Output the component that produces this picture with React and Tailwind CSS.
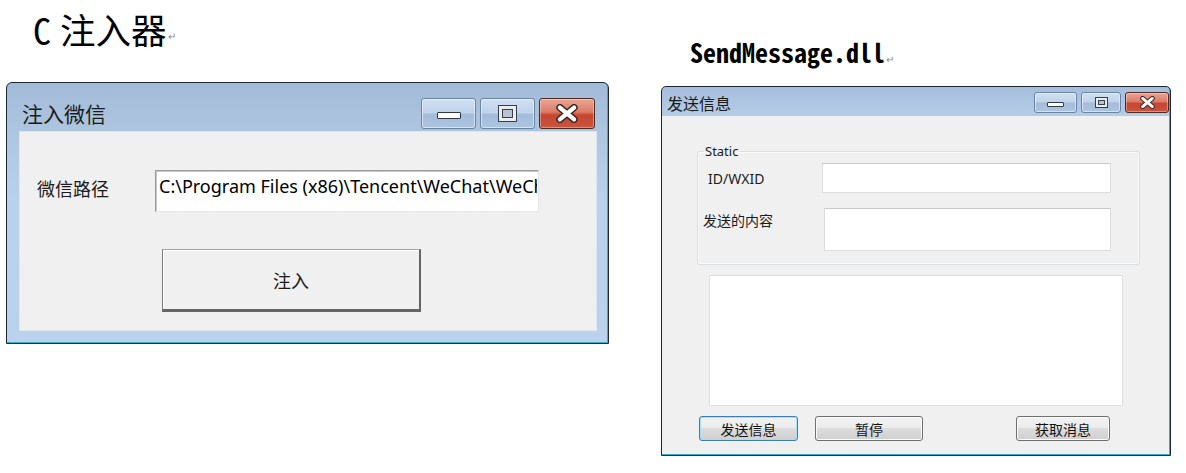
const cjk = "font-['Noto_Sans_CJK_SC',sans-serif]";
const ui = "font-['Noto_Sans','Noto_Sans_CJK_SC',sans-serif]";

function CloseX({ w, h }) {
  return (
    <svg width={w} height={h} viewBox="0 0 20 16">
      <path d="M4 3 L16 13 M16 3 L4 13" stroke="#3b2622" strokeWidth="6" strokeLinecap="round" fill="none" />
      <path d="M4 3 L16 13 M16 3 L4 13" stroke="#ffffff" strokeWidth="3.6" strokeLinecap="round" fill="none" />
    </svg>
  );
}

function CaptionButtonsLarge() {
  return (
    <div className="flex gap-[4px]">
      <div className="flex h-[31px] w-[55px] items-center justify-center rounded-[3px] border border-[#6c84a4] bg-[linear-gradient(to_bottom,#d0e0f2_0%,#bfd3eb_48%,#a3bcda_52%,#adc5e0_100%)] shadow-[inset_0_0_0_1px_rgba(255,255,255,0.5)]">
        <div className="mt-[5px] h-[7px] w-[24px] rounded-[1px] border border-[#2c3a4c] bg-white" />
      </div>
      <div className="flex h-[31px] w-[55px] items-center justify-center rounded-[3px] border border-[#6c84a4] bg-[linear-gradient(to_bottom,#d0e0f2_0%,#bfd3eb_48%,#a3bcda_52%,#adc5e0_100%)] shadow-[inset_0_0_0_1px_rgba(255,255,255,0.5)]">
        <div className="h-[17px] w-[19px] border border-[#343f4d] bg-[#ececec] p-[3px]">
          <div className="h-full w-full border border-[#343f4d] bg-[#b7c3d2]" />
        </div>
      </div>
      <div className="flex h-[31px] w-[56px] items-center justify-center rounded-[3px] border border-[#4f2a22] bg-[linear-gradient(to_bottom,#e9a596_0%,#dc7b67_45%,#c7462f_55%,#c95540_100%)] shadow-[inset_0_0_0_1px_rgba(255,255,255,0.35)]">
        <CloseX w={24} h={19} />
      </div>
    </div>
  );
}

function CaptionButtonsSmall() {
  return (
    <div className="flex gap-[4px]">
      <div className="flex h-[21px] w-[43px] items-center justify-center rounded-[3px] border border-[#6c84a4] bg-[linear-gradient(to_bottom,#d0e0f2_0%,#bfd3eb_48%,#a3bcda_52%,#adc5e0_100%)] shadow-[inset_0_0_0_1px_rgba(255,255,255,0.5)]">
        <div className="mt-[3px] h-[5px] w-[17px] rounded-[1px] border border-[#2c3a4c] bg-white" />
      </div>
      <div className="flex h-[21px] w-[40px] items-center justify-center rounded-[3px] border border-[#6c84a4] bg-[linear-gradient(to_bottom,#d0e0f2_0%,#bfd3eb_48%,#a3bcda_52%,#adc5e0_100%)] shadow-[inset_0_0_0_1px_rgba(255,255,255,0.5)]">
        <div className="h-[11px] w-[13px] border border-[#343f4d] bg-[#ececec] p-[2px]">
          <div className="h-full w-full border border-[#343f4d] bg-[#b7c3d2]" />
        </div>
      </div>
      <div className="flex h-[21px] w-[44px] items-center justify-center rounded-[3px] border border-[#4f2a22] bg-[linear-gradient(to_bottom,#e9a596_0%,#dc7b67_45%,#c7462f_55%,#c95540_100%)] shadow-[inset_0_0_0_1px_rgba(255,255,255,0.35)]">
        <CloseX w={17} h={13} />
      </div>
    </div>
  );
}

function WinButton({ children, width, focused }) {
  return (
    <button
      className={
        "flex h-[25px] items-center justify-center rounded-[3px] border bg-[linear-gradient(to_bottom,#f2f2f2_0%,#ebebeb_50%,#dddddd_50%,#cfcfcf_100%)] text-[14px] leading-none text-[#111] " +
        cjk +
        " " +
        width +
        (focused
          ? " border-[#3c7fb1] shadow-[inset_0_0_0_1px_#a9dcf7]"
          : " border-[#707070] shadow-[inset_0_0_0_1px_#fbfbfb]")
      }
    >
      {children}
    </button>
  );
}

function InjectWindow() {
  return (
    <div className="h-[262px] w-[603px] rounded-t-[6px] border border-[#1d2733] bg-[linear-gradient(to_bottom,#a2bbd8_0%,#aec6e0_20%,#b9d1ea_45%,#bad2eb_100%)] shadow-[inset_-1px_-1px_0_#2fb2c8]">
      <div className="flex h-[48px] items-center pb-[2px] pl-[15px] pr-[13px] pt-[14px]">
        <span className={"flex-1 text-[21px] leading-none text-[#1b1b1b] " + cjk}>注入微信</span>
        <CaptionButtonsLarge />
      </div>
      <div className="ml-[12px] h-[200px] w-[578px] border border-[#dde6f0] bg-[#f0f0f0] pt-[38px]">
        <div className="flex items-start">
          <span className={"w-[135px] pl-[17px] pt-[6px] text-[18px] leading-[24px] text-[#1b1b1b] " + cjk}>微信路径</span>
          <div className="h-[42px] w-[384px] overflow-hidden border border-b-[#e6e6e6] border-l-[#9a9a9a] border-r-[#e6e6e6] border-t-[#9a9a9a] bg-white pl-[3px] pt-[3px] shadow-[inset_1px_1px_0_#c8c8c8]">
            <div className={"w-[378px] overflow-hidden whitespace-nowrap text-[18px] leading-[24px] text-black " + ui}>
              C:\Program Files (x86)\Tencent\WeChat\WeCh
            </div>
          </div>
        </div>
        <div className="ml-[142px] mt-[37px] flex h-[63px] w-[259px] items-center justify-center border border-b-[3px] border-r-[2px] border-b-[#646464] border-l-[#7a7a7a] border-r-[#646464] border-t-[#a5a5a5] bg-[#f0f0f0] shadow-[inset_1px_1px_0_#ffffff]">
          <span className={"text-[18px] leading-none text-[#1b1b1b] " + cjk}>注入</span>
        </div>
      </div>
    </div>
  );
}

function SendWindow() {
  return (
    <div className="h-[370px] w-[510px] rounded-t-[5px] border border-[#1d2733] bg-[linear-gradient(to_bottom,#a5bedb_0%,#b6cde7_8%)] shadow-[inset_-1px_-1px_0_#2fb2c8]">
      <div className="flex h-[29px] items-center pb-[3px] pl-[5px] pr-[1px] pt-[5px]">
        <span className={"flex-1 text-[16px] leading-none text-[#1b1b1b] " + cjk}>发送信息</span>
        <CaptionButtonsSmall />
      </div>
      <div className="mr-[1px] h-[338px] bg-[#f0f0f0] pt-[27px]">
        <fieldset className="ml-[35px] w-[443px] rounded-[3px] border border-[#d5dfe5] px-0 pb-[13px] pt-[4px] shadow-[inset_0_0_0_1px_#fafafa]">
          <legend className={"ml-[6px] px-[1px] text-[13px] leading-[16px] text-[#1b1b1b] " + ui}>Static</legend>
          <div className="flex items-center">
            <span className={"w-[124px] pl-[10px] text-[14px] text-[#1b1b1b] " + ui}>ID/WXID</span>
            <div className="h-[30px] w-[289px] border border-[#dcdcdc] border-t-[#c8c8c8] bg-white" />
          </div>
          <div className="mt-[15px] flex items-start">
            <span className={"w-[126px] pl-[5px] pt-[4px] text-[14px] leading-[16px] text-[#1b1b1b] " + cjk}>发送的内容</span>
            <div className="h-[43px] w-[287px] border border-[#dcdcdc] border-t-[#c8c8c8] bg-white" />
          </div>
        </fieldset>
        <div className="ml-[47px] mt-[10px] h-[131px] w-[414px] border border-[#dedede] bg-white" />
        <div className="mt-[10px] flex pl-[37px]">
          <WinButton width="w-[99px]" focused>发送信息</WinButton>
          <div className="ml-[17px]">
            <WinButton width="w-[108px]">暂停</WinButton>
          </div>
          <div className="ml-[93px]">
            <WinButton width="w-[94px]">获取消息</WinButton>
          </div>
        </div>
      </div>
    </div>
  );
}

export default function App() {
  return (
    <div className="flex h-[473px] w-[1186px] overflow-hidden bg-white">
      <div className="flex w-[609px] flex-col pl-[6px]">
        <div className="flex h-[82px] items-start pl-[27px] pt-[11px]">
          <span className="mr-[9px] font-['Noto_Sans_Mono_CJK_SC','Noto_Sans_CJK_SC',sans-serif] text-[36px] leading-none text-black">C</span>
          <span className={"text-[35.5px] leading-none text-black " + cjk}>注入器</span>
          <span className="ml-[1px] mt-[20px] text-[10px] leading-none text-[#8a8a8a]">↵</span>
        </div>
        <InjectWindow />
      </div>
      <div className="ml-[52px] flex flex-col">
        <div className="flex h-[86px] items-start pl-[29px] pt-[39px]">
          <span className="font-['Noto_Sans_Mono_CJK_SC','DejaVu_Sans_Mono',monospace] text-[26px] font-bold leading-none text-black">
            SendMessage.dll
          </span>
          <span className="ml-[1px] mt-[15px] text-[10px] leading-none text-[#8a8a8a]">↵</span>
        </div>
        <SendWindow />
      </div>
    </div>
  );
}
